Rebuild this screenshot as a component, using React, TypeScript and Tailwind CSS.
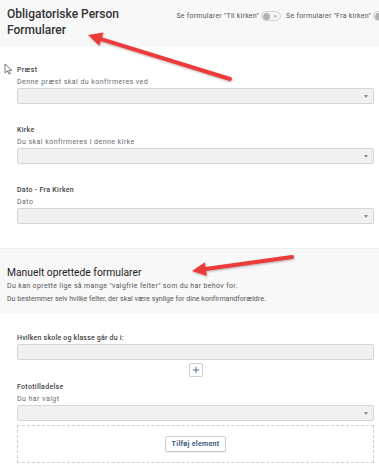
import { Plus } from "lucide-react";

const FONT = "font-['Roboto','Liberation_Sans',sans-serif]";

function Toggle() {
  return (
    <span className="inline-flex h-[10px] w-[20px] shrink-0 items-center justify-between rounded-full border border-[#d4d4d4] bg-[#f3f3f3] px-[1px]">
      <span className="h-[7px] w-[7px] rounded-full bg-[#b0b0b0]" />
      <span className="mr-[2px] text-[6px] leading-none text-[#9a9a9a]">×</span>
    </span>
  );
}

function SelectBox() {
  return (
    <div className="flex h-[16px] items-center justify-end rounded-[2px] border border-[#d6d6d6] bg-[#f1f1f1] pr-[5px]">
      <span className="h-0 w-0 border-x-[2.5px] border-t-[3px] border-x-transparent border-t-[#8a8a8a]" />
    </div>
  );
}

function Field({ label, hint, last }: { label: string; hint: string; last?: boolean }) {
  return (
    <div className={last ? "" : "mb-[20px]"}>
      <p className="text-[7px] font-medium leading-[12px] tracking-[0.3px] text-[#444]">{label}</p>
      <p className="text-[7px] leading-[12px] tracking-[0.45px] text-[#646b72]">{hint}</p>
      <SelectBox />
    </div>
  );
}

function Arrow({ x1, y1, x2, y2 }: { x1: number; y1: number; x2: number; y2: number }) {
  // tail (x1,y1) -> tip (x2,y2)
  const a = Math.atan2(y2 - y1, x2 - x1);
  const len = 14;
  const w = 7;
  const bx = x2 - Math.cos(a) * len;
  const by = y2 - Math.sin(a) * len;
  const px = -Math.sin(a) * w;
  const py = Math.cos(a) * w;
  return (
    <g>
      <line x1={x1} y1={y1} x2={bx + Math.cos(a) * 2} y2={by + Math.sin(a) * 2} stroke="#ec3b3b" strokeWidth={4} strokeLinecap="round" />
      <polygon points={`${x2},${y2} ${bx + px},${by + py} ${bx - px},${by - py}`} fill="#ec3b3b" />
    </g>
  );
}

export default function App() {
  return (
    <div className={`relative h-[467px] w-[379px] overflow-hidden bg-white ${FONT}`}>
      {/* header */}
      <div className="flex h-[47px] items-start justify-between overflow-hidden bg-[#f8f8f8] pl-[7px] pt-[6px]">
        <h1 className="w-[150px] text-[12px] font-medium leading-[16px] text-[#333]">
          Obligatoriske Person Formularer
        </h1>
        <div className="-mr-[14px] flex items-center gap-[5px] whitespace-nowrap pt-[5px] text-[7px] tracking-[0.25px] text-[#555]">
          <span className="flex items-center gap-[2px]">
            Se formularer "Til kirken" <Toggle />
          </span>
          <span className="flex items-center gap-[2px]">
            Se formularer "Fra kirken" <Toggle />
          </span>
        </div>
      </div>

      {/* cursor */}
      <svg className="absolute left-[4px] top-[63px]" width="9" height="12" viewBox="0 0 9 12">
        <path d="M1 1 L1 10 L3.3 7.8 L5 11 L6.3 10.4 L4.7 7.3 L7.8 7.2 Z" fill="#fff" stroke="#555" strokeWidth="0.8" strokeLinejoin="round" />
      </svg>

      <div className="pl-[17px] pr-[5px] pt-[17px]">
        <Field label="Præst" hint="Denne præst skal du konfirmeres ved" />
        <Field label="Kirke" hint="Du skal konfirmeres i denne kirke" />
        <Field label="Dato - Fra Kirken" hint="Dato" last />
      </div>

      {/* manual section */}
      <div className="mt-[24px] h-[65px] border-t border-[#eeeeee] bg-[#f8f8f8] pl-[7px] pt-[17px]">
        <h2 className="text-[10.3px] leading-[14px] text-[#222]">Manuelt oprettede formularer</h2>
        <p className="whitespace-nowrap text-[7px] leading-[13px] tracking-[0.35px] text-[#555]">
          Du kan oprette lige så mange "valgfrie felter" som du har behov for.
        </p>
        <p className="whitespace-nowrap text-[7px] leading-[13px] tracking-[0.03px] text-[#555]">
          Du bestemmer selv hvilke felter, der skal være synlige for dine konfirmandforældre.
        </p>
      </div>

      <div className="pl-[17px] pr-[5px] pt-[20px]">
        <p className="text-[7px] font-medium leading-[11px] tracking-[0.2px] text-[#444]">
          Hvilken skole og klasse går du i:
        </p>
        <div className="h-[16px] rounded-[2px] border border-[#d6d6d6] bg-[#f1f1f1]" />
        <div className="mt-[3px] flex justify-center">
          <button className="flex h-[14px] w-[14px] items-center justify-center rounded-[2px] border border-[#cfcfcf] bg-white text-[#3d5a78]">
            <Plus size={10} strokeWidth={2} />
          </button>
        </div>
        <div className="mt-[4px]">
          <p className="text-[7px] font-medium leading-[12px] tracking-[0.3px] text-[#444]">Fototilladelse</p>
          <p className="text-[7px] leading-[12px] tracking-[0.45px] text-[#646b72]">Du har valgt</p>
          <SelectBox />
        </div>
        <div className="mt-[4px] flex h-[38px] items-center justify-center border border-dashed border-[#cfcfcf]">
          <button className="flex h-[16px] w-[61px] items-center justify-center rounded-[2px] border border-[#cfcfcf] bg-white text-[7px] font-bold tracking-[0.3px] text-[#3d5a78] shadow-[0_1px_1px_rgba(0,0,0,0.08)]">
            Tilføj element
          </button>
        </div>
      </div>

      {/* annotation arrows */}
      <svg className="pointer-events-none absolute left-0 top-0" width="379" height="467">
        <defs>
          <filter id="sh" x="-10%" y="-50%" width="120%" height="200%">
            <feDropShadow dx="0.5" dy="1" stdDeviation="0.8" floodColor="#000" floodOpacity="0.3" />
          </filter>
        </defs>
        <g filter="url(#sh)">
          <Arrow x1={230} y1={79} x2={88} y2={35} />
          <Arrow x1={292} y1={257} x2={192} y2={271} />
        </g>
      </svg>
    </div>
  );
}
